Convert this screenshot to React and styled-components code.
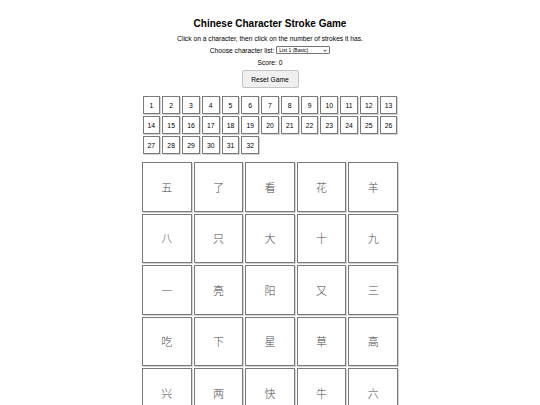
import React, { useState } from 'react';
import styled, { createGlobalStyle } from 'styled-components';

const GlobalStyle = createGlobalStyle`
	html, body {
		margin: 0;
		padding: 0;
		background: #ffffff;
		font-family: "Liberation Sans", Arial, sans-serif;
		color: #000;
	}
`;

const Page = styled.div`
	display: flex;
	flex-direction: column;
	align-items: center;
	padding-top: 18px;
`;

const Title = styled.h1`
	margin: 0;
	font-size: 10px;
	line-height: 12px;
	font-weight: 700;
`;

const Line = styled.div`
	font-size: 6.7px;
	line-height: 9px;
	margin-top: ${props => props.gap || 3}px;
	display: flex;
	align-items: center;
	gap: 2px;
`;

const SelectWrap = styled.span`
	position: relative;
	display: inline-flex;
`;

const Select = styled.select`
	appearance: none;
	-webkit-appearance: none;
	font-family: "Liberation Sans", Arial, sans-serif;
	font-size: 5px;
	line-height: 6px;
	height: 8px;
	width: 54px;
	padding: 0 0 0 2px;
	border: 1px solid #767676;
	border-radius: 1px;
	background: #fff;
	color: #000;
	margin: 0;
`;

const Chevron = styled.svg`
	position: absolute;
	right: 3px;
	top: 2.5px;
	width: 4px;
	height: 3px;
	pointer-events: none;
`;

const ResetButton = styled.button`
	margin-top: 3.5px;
	width: 57px;
	height: 18px;
	font-family: "Liberation Sans", Arial, sans-serif;
	font-size: 6.7px;
	color: #000;
	background: #efefef;
	border: 1px solid #c4c4c4;
	border-radius: 2px;
	padding: 0;
`;

const NumberGrid = styled.div`
	margin-top: 8px;
	width: 255px;
	display: grid;
	grid-template-columns: repeat(13, 1fr);
	grid-auto-rows: 18px;
	gap: 2px;
`;

const NumberButton = styled.button`
	font-family: "Liberation Sans", Arial, sans-serif;
	font-size: 6.8px;
	color: #000;
	background: ${props => (props.active ? '#dfe9f7' : '#fff')};
	border: 1px solid #7a7a7a;
	box-shadow: 1px 1px 0 #d4d4d4;
	padding: 0;
	margin: 0;
`;

const CharGrid = styled.div`
	margin-top: 8px;
	width: 256px;
	display: grid;
	grid-template-columns: repeat(5, 1fr);
	grid-auto-rows: 49.5px;
	gap: 2px;
`;

const CharCell = styled.div`
	display: flex;
	align-items: center;
	justify-content: center;
	border: 1px solid #7a7a7a;
	box-shadow: 1px 1px 0 #d4d4d4;
	background: ${props => (props.selected ? '#eef4fc' : '#fff')};
	font-family: "Noto Sans CJK SC", "Noto Sans", sans-serif;
	font-size: 11px;
	font-weight: 300;
	color: #4a4a4a;
	cursor: pointer;
`;

const characters = [
	'五', '了', '看', '花', '羊',
	'八', '只', '大', '十', '九',
	'一', '亮', '阳', '又', '三',
	'吃', '下', '星', '草', '高',
	'兴', '两', '快', '牛', '六',
];

const numbers = Array.from({ length: 32 }, (_, i) => i + 1);

export default function App() {
	const [selected, setSelected] = useState(null);
	const [score, setScore] = useState(0);

	return (
		<Page>
			<GlobalStyle />
			<Title>Chinese Character Stroke Game</Title>
			<Line gap={3.5}>Click on a character, then click on the number of strokes it has.</Line>
			<Line gap={3}>
				<span>Choose character list:</span>
				<SelectWrap>
					<Select defaultValue="1">
						<option value="1">List 1 (Basic)</option>
						<option value="2">List 2</option>
					</Select>
					<Chevron viewBox="0 0 8 6">
						<path d="M1 1.5 L4 4.5 L7 1.5" fill="none" stroke="#000" strokeWidth="1.6" />
					</Chevron>
				</SelectWrap>
			</Line>
			<Line gap={3}>Score: {score}</Line>
			<ResetButton onClick={() => { setScore(0); setSelected(null); }}>Reset Game</ResetButton>
			<NumberGrid>
				{numbers.map(n => (
					<NumberButton key={n}>{n}</NumberButton>
				))}
			</NumberGrid>
			<CharGrid>
				{characters.map((c, i) => (
					<CharCell key={i} selected={selected === i} onClick={() => setSelected(i)}>
						{c}
					</CharCell>
				))}
			</CharGrid>
		</Page>
	);
}
